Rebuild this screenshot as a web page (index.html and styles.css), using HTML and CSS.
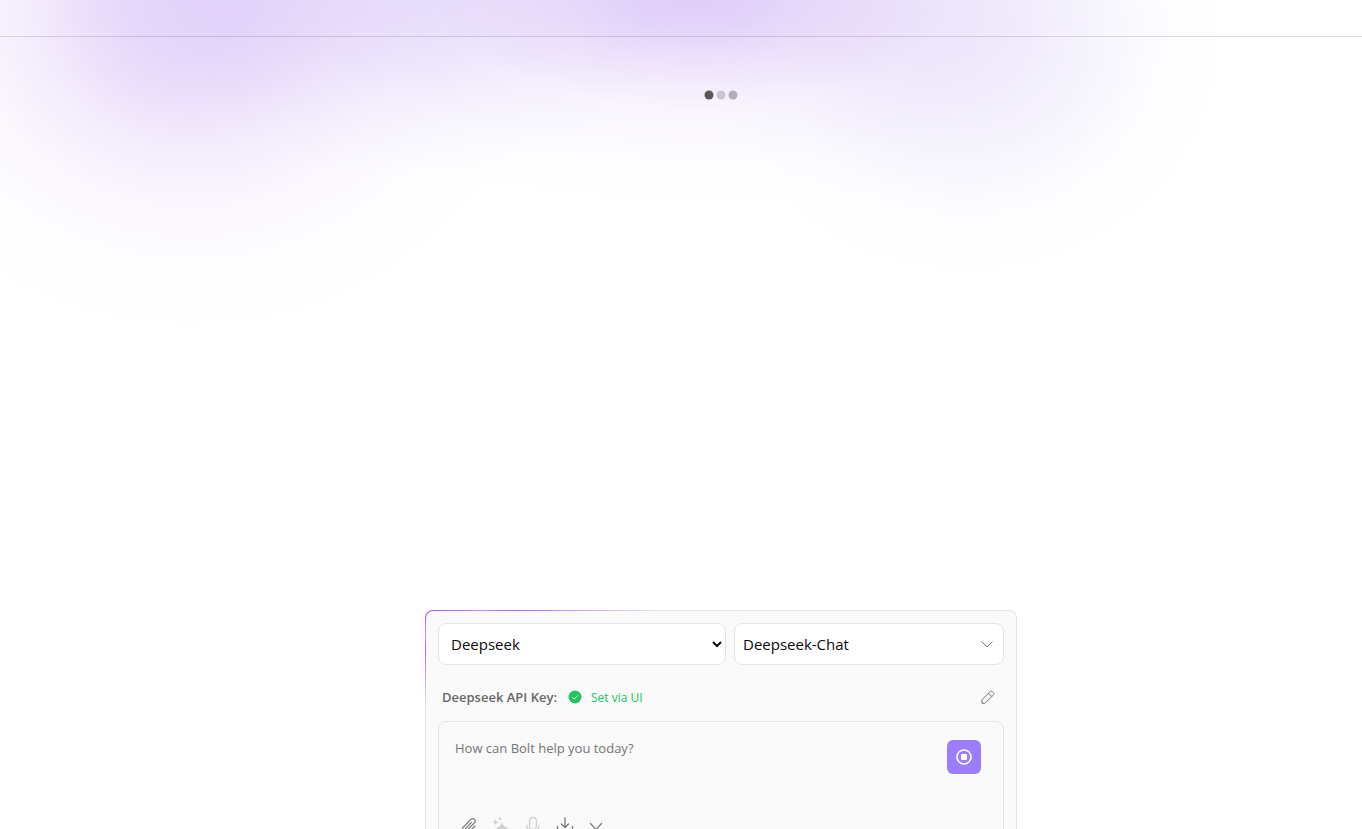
FILE: index.html
```
<!DOCTYPE html>
<html lang="en">
<head>
<meta charset="UTF-8" />
<meta name="viewport" content="width=device-width, initial-scale=1.0" />
<title>Bolt</title>
<link rel="stylesheet" href="styles.css">
</head>
<body>

<header class="header"></header>

<main class="chat">
  <!-- Loading dots -->
  <svg class="loader" viewBox="0 0 24 24" role="img" aria-label="Loading">
    <circle cx="4" cy="12" r="3" fill="#5a5759" />
    <circle cx="12" cy="12" r="3" fill="#cbc5d1" />
    <circle cx="20" cy="12" r="3" fill="#b2adb5" />
  </svg>

  <section class="composer">
    <!-- Provider and model -->
    <div class="selectors">
      <select class="select provider" aria-label="Provider">
        <option>Deepseek</option>
      </select>
      <div class="model">
        <select class="select model-select" aria-label="Model">
          <option>Deepseek-Chat</option>
        </select>
        <svg class="model-caret" viewBox="0 0 16 16"><path d="M2.500 5.500 8 11l5.500-5.500" /></svg>
      </div>
    </div>

    <!-- API key -->
    <div class="api-key">
      <span class="api-label">Deepseek API Key:</span>
      <svg class="check" viewBox="0 0 16 16">
        <circle cx="8" cy="8" r="6.500" />
        <path d="M5.500 8.300 7.200 10l3.500-3.500" />
      </svg>
      <span class="api-status">Set via UI</span>
      <button class="edit-btn" aria-label="Edit API Key">
        <svg class="icon" viewBox="0 0 16 16">
          <path d="M2 14v-3.300L10.400 2.300a1 1 0 0 1 1.400 0l1.900 1.900a1 1 0 0 1 0 1.400L5.300 14zM8.500 4.200l3.300 3.300" />
        </svg>
      </button>
    </div>

    <!-- Prompt -->
    <div class="prompt">
      <textarea class="prompt-input" aria-label="Prompt" placeholder="How can Bolt help you today?"></textarea>
      <button class="stop-btn" aria-label="Stop">
        <svg class="stop-icon" viewBox="0 0 20 20">
          <circle cx="10" cy="10" r="7" stroke-width="1.6" />
          <rect x="7" y="7" width="6" height="6" rx="1" />
        </svg>
      </button>
      <div class="tools">
        <button class="tool-btn" aria-label="Attach file">
          <svg class="icon" viewBox="0 0 20 20" stroke-width="1.2">
            <path d="m12.500 6.300-6.400 6.500a1.200 1.200 0 0 0 1.800 1.700l7.700-7.800a2.500 2.500 0 0 0-3.500-3.500l-7.800 7.900a3.700 3.700 0 0 0 5.300 5.300l6.400-6.400" />
          </svg>
        </button>
        <button class="tool-btn" aria-label="Enhance prompt" disabled>
          <svg class="icon solid" viewBox="0 0 20 20">
            <path d="M11 5.500c.9 4 2.500 5.500 6.500 6.500-4 1-5.600 2.500-6.500 6.500-.9-4-2.500-5.500-6.500-6.500 4-1 5.600-2.500 6.500-6.500zM4.500 3c.5 2 1.200 2.700 3.200 3.200-2 .5-2.700 1.200-3.200 3.200-.5-2-1.200-2.700-3.200-3.200 2-.5 2.700-1.200 3.200-3.200zM9 .3c.3 1.500.9 2 2.400 2.400-1.500.4-2.100.9-2.400 2.400-.3-1.500-.9-2-2.400-2.400 1.500-.4 2.100-.9 2.400-2.400z" />
          </svg>
        </button>
        <button class="tool-btn" aria-label="Voice input" disabled>
          <svg class="icon" viewBox="0 0 20 20" stroke-width="1.3">
            <rect x="6.500" y="1.500" width="7" height="12" rx="3.500" />
            <path d="M4 9.500a6 6 0 0 0 12 0M10 15.500V19" />
          </svg>
        </button>
        <button class="tool-btn" aria-label="Export chat">
          <svg class="icon" viewBox="0 0 20 20" stroke-width="1.3">
            <path d="M10 2v9M6.500 8 10 11.500 13.500 8M2.500 10.500v6h15v-6" />
          </svg>
        </button>
        <button class="tool-btn" aria-label="More">
          <svg class="icon" viewBox="0 0 20 20" stroke-width="1.2"><path d="m3.500 7.500 5.500 6 5.500-6" /></svg>
        </button>
      </div>
    </div>
  </section>
</main>

</body>
</html>
```
FILE: styles.css
```
* {
  box-sizing: border-box;
}

body {
  margin: 0;
  height: 100vh;
  overflow: hidden;
  font-family: "Segoe UI", "Open Sans", "Noto Sans", sans-serif;
  background-color: #fff;
  background-image:
    radial-gradient(370px 340px at 14% 0, rgba(152, 92, 238, 0.27), rgba(152, 92, 238, 0.25) 15%, rgba(158, 92, 232, 0.19) 30%, rgba(158, 92, 232, 0.12) 42%, rgba(158, 92, 238, 0.05) 60%, rgba(152, 92, 238, 0.01) 80%, transparent),
    radial-gradient(260px 180px at 31% 0, rgba(132, 92, 238, 0.13), rgba(132, 92, 238, 0.09) 30%, rgba(132, 92, 238, 0.03) 65%, transparent),
    radial-gradient(500px 210px at 51% 0, rgba(152, 92, 238, 0.31), rgba(152, 92, 238, 0.26) 15%, rgba(160, 92, 230, 0.16) 32%, rgba(152, 92, 238, 0.06) 52%, rgba(152, 92, 238, 0.01) 80%, transparent),
    radial-gradient(260px 235px at 71% 45px, rgba(138, 100, 232, 0.11), rgba(138, 100, 232, 0.1) 20%, rgba(138, 100, 232, 0.07) 45%, rgba(138, 100, 232, 0.02) 72%, transparent);
}

.header {
  height: 37px;
  border-bottom: 1px solid rgba(0, 0, 0, 0.12);
}

.chat {
  height: 100vh;
  padding: 40px 16px 0 96px;
  display: flex;
  flex-direction: column;
  align-items: center;
  justify-content: space-between;
}

.loader {
  width: 36px;
  height: 36px;
}

.composer {
  width: 100%;
  max-width: 592px;
  padding: 12px;
  border: 1px solid transparent;
  border-radius: 8px;
  background:
    linear-gradient(#fafafa, #fafafa) padding-box,
    radial-gradient(230px 100px at 0 0, #b44aff, #cf8cf8 25%, #b95cff 38%, rgba(190, 110, 250, 0.5) 70%, transparent) border-box,
    linear-gradient(#e3e3e3, #e3e3e3) border-box;
}

.selectors {
  display: grid;
  grid-template-columns: 16fr 15fr;
  gap: 8px;
}

.select {
  width: 100%;
  height: 42px;
  padding: 0 8px;
  border: 1px solid #e4e4e4;
  border-radius: 8px;
  background-color: #fff;
  color: #0a0a0a;
  font-family: inherit;
  font-size: 15px;
}

.provider {
  padding-right: 0;
}

.model {
  position: relative;
}

.model-select {
  appearance: none;
}

.model-caret {
  position: absolute;
  top: 13px;
  right: 9px;
  width: 16px;
  height: 16px;
  fill: none;
  stroke: #777;
  pointer-events: none;
}

.api-key {
  height: 32px;
  margin: 16px 0 8px;
  padding: 0 4px;
  display: flex;
  align-items: center;
}

.api-label {
  margin-right: 10px;
  color: #666;
  font-size: 13px;
  font-weight: 600;
}

.check {
  width: 16px;
  height: 16px;
  margin-right: 8px;
  fill: #22c55e;
}

.check path {
  fill: none;
  stroke: #fff;
}

.api-status {
  color: #22c55e;
  font-size: 12px;
}

.edit-btn {
  margin-left: auto;
  width: 24px;
  height: 24px;
  padding: 4px;
  border: none;
  background: none;
  color: #777;
}

.icon {
  display: block;
  width: 100%;
  height: 100%;
  fill: none;
  stroke: currentColor;
  stroke-linecap: round;
  stroke-linejoin: round;
}

.solid {
  fill: currentColor;
  stroke: none;
}

.prompt {
  position: relative;
  border: 1px solid #e3e3e3;
  border-radius: 8px;
}

.prompt-input {
  display: block;
  width: 100%;
  height: 76px;
  padding: 16px 64px 0 16px;
  border: none;
  outline: none;
  resize: none;
  background: none;
  color: #0a0a0a;
  font-family: inherit;
  font-size: 13px;
  line-height: 20px;
}

.prompt-input::placeholder {
  color: #757575;
}

.stop-btn {
  position: absolute;
  top: 18px;
  right: 22px;
  width: 34px;
  height: 34px;
  padding: 7px;
  border: none;
  border-radius: 6px;
  background-color: #9c7dff;
}

.stop-icon {
  display: block;
  width: 20px;
  height: 20px;
  fill: #fff;
}

.stop-icon circle {
  fill: none;
  stroke: #fff;
}

.tools {
  display: flex;
  gap: 4px;
  padding: 14px 16px 12px;
}

.tool-btn {
  width: 28px;
  height: 28px;
  padding: 4px;
  border: none;
  background: none;
  color: #777;
}

.tool-btn:disabled {
  color: #d0d0d0;
}
```
